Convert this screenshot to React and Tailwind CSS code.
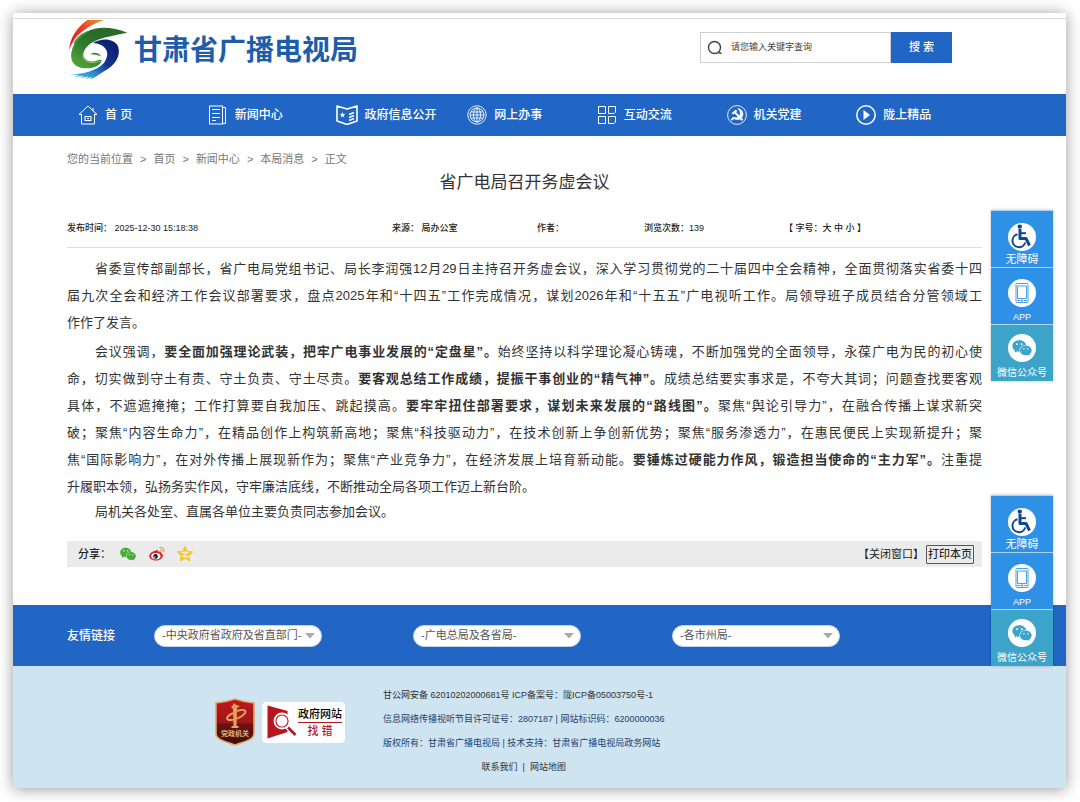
import { AiFillWechat } from 'react-icons/ai';

const navItems = [
  { label: '首 页', icon: HomeIcon },
  { label: '新闻中心', icon: NewsIcon },
  { label: '政府信息公开', icon: GovIcon },
  { label: '网上办事', icon: GlobeIcon },
  { label: '互动交流', icon: GridIcon },
  { label: '机关党建', icon: PartyIcon },
  { label: '陇上精品', icon: PlayIcon },
];

const crumbs = ['首页', '新闻中心', '本局消息', '正文'];

const friendLinks = [
  { id: 'gov', label: '-中央政府省政府及省直部门-' },
  { id: 'radio', label: '-广电总局及各省局-' },
  { id: 'city', label: '-各市州局-' },
];

function Logo() {
  return (
    <svg viewBox="0 0 216 204" className="h-[68px] w-[72px] shrink-0" aria-hidden="true">
      <defs>
        <linearGradient id="flame" x1="0" y1="1" x2="1" y2="0">
          <stop offset="0" stopColor="#d8131f" />
          <stop offset="0.5" stopColor="#e6352a" />
          <stop offset="1" stopColor="#f09a35" />
        </linearGradient>
        <linearGradient id="leaf" x1="0" y1="0.7" x2="0.5" y2="0.2">
          <stop offset="0" stopColor="#4c9c38" />
          <stop offset="0.5" stopColor="#2d7a2d" />
          <stop offset="1" stopColor="#2a6b28" />
        </linearGradient>
        <linearGradient id="wave" x1="1" y1="0.2" x2="0" y2="1">
          <stop offset="0" stopColor="#0a1f70" />
          <stop offset="0.35" stopColor="#12348f" />
          <stop offset="0.65" stopColor="#2f93d8" />
          <stop offset="1" stopColor="#55c3f2" />
        </linearGradient>
      </defs>
      <path d="M22 106C22 70 46 36 76 15H128C96 24 58 46 38 72C30 84 25 94 22 106Z" fill="url(#flame)" />
      <path d="M92 84C120 68 156 70 168 94C178 122 160 152 124 170C108 180 94 190 84 193L90 185L70 192L80 184L54 190L66 182L38 186L52 180L17 179C62 178 104 168 126 144C146 116 136 88 92 84Z" fill="url(#wave)" />
      <path d="M196 53C150 34 104 34 74 50C40 70 24 104 28 130C33 158 64 164 92 158C110 152 120 144 118 134L108 136C88 144 68 138 64 122C62 104 80 84 108 74C134 64 164 60 196 53Z" fill="url(#leaf)" />
      <path d="M84 118C94 110 112 112 117 124C106 120 96 118 84 118Z" fill="#3d8e34" />
      <path d="M63 118C58 140 84 150 118 138" fill="none" stroke="#86c04a" strokeWidth="3" />
      <path d="M34 84C48 62 64 50 88 46C66 56 50 68 40 88Z" fill="#4c9c38" />
    </svg>
  );
}

function HomeIcon() {
  return (
    <svg viewBox="0 0 20 20" className="h-5 w-5 shrink-0" fill="none" stroke="currentColor">
      <path d="M1 9.5L10 1L19 9.5M1 9.5H4M16 9.5H19M3.5 9.5V19H16.5V9.5" />
      <rect x="7" y="11.5" width="6" height="4" />
      <path d="M9 13.5H11M15 3V6" />
    </svg>
  );
}

function NewsIcon() {
  return (
    <svg viewBox="0 0 20 20" className="h-5 w-5 shrink-0" fill="none" stroke="currentColor">
      <rect x="1.5" y="1" width="13" height="18" />
      <path d="M14.5 2.5H17.5V18.5H14.5M4 4.5H12M4 8.5H12M4 12.5H12M4 15.5H8" />
    </svg>
  );
}

function GovIcon() {
  return (
    <svg viewBox="0 0 22 20" className="h-5 w-[22px] shrink-0" fill="none" stroke="currentColor" strokeWidth="1.6">
      <path d="M1 1L11 4L21 1V16L11 19.5L1 16Z" strokeLinejoin="round" />
      <path d="M13 9.5L18 7.5M13 12.5L18 10.5M13 15.5L18 13.5" strokeWidth="1.4" />
      <path d="M6.5 7L7.3 9H9.3L7.7 10.3L8.3 12.4L6.5 11.2L4.7 12.4L5.3 10.3L3.7 9H5.7Z" fill="currentColor" stroke="none" />
    </svg>
  );
}

function GlobeIcon() {
  return (
    <svg viewBox="0 0 20 20" className="h-5 w-5 shrink-0" fill="none" stroke="currentColor" strokeWidth="0.9">
      <circle cx="10" cy="10" r="9.2" />
      <circle cx="10" cy="10" r="7" />
      <ellipse cx="10" cy="10" rx="3.5" ry="7" />
      <path d="M10 3V17M3 10H17M4 7H16M4 13H16" />
    </svg>
  );
}

function GridIcon() {
  return (
    <svg viewBox="0 0 20 20" className="h-5 w-5 shrink-0" fill="none" stroke="currentColor">
      <path d="M1.5 1.5H8.5V8.5H1.5ZM11.5 1.5H18.5V7L17 8.5H11.5ZM1.5 11.5H8.5V18.5H1.5ZM11.5 11.5H18.5V17L17 18.5H11.5Z" />
    </svg>
  );
}

function PartyIcon() {
  return (
    <svg viewBox="0 0 20 20" className="h-5 w-5 shrink-0" fill="none" stroke="currentColor">
      <circle cx="10" cy="10" r="9.4" strokeWidth="0.9" />
      <path d="M11 3.6C16.2 4.6 17.4 10.6 13.8 13.4C11.2 15.4 7.8 14.6 5.8 12.4C8.4 13 11.4 12.8 12.8 10.4C14 8 13.4 5.6 11 3.6Z" fill="currentColor" strokeWidth="0.8" />
      <path d="M4.600 8.200L8.800 4.400L10.400 6L6.200 9.600Z" fill="currentColor" stroke="none" />
      <path d="M7.800 7.200L15.500 15.200" strokeWidth="2" />
      <path d="M6.500 13L4.300 15.200" strokeWidth="1.8" />
    </svg>
  );
}

function PlayIcon() {
  return (
    <svg viewBox="0 0 20 20" className="h-5 w-5 shrink-0" fill="none" stroke="currentColor" strokeWidth="1.5">
      <circle cx="10" cy="10" r="9.2" />
      <path d="M7.5 5L14 10L7.5 15Z" fill="currentColor" stroke="none" />
    </svg>
  );
}

function SearchIcon() {
  return (
    <svg viewBox="0 0 16 16" className="h-4 w-4 shrink-0" fill="none" stroke="#444" strokeWidth="1.5">
      <circle cx="7.5" cy="7.5" r="6" />
      <path d="M11.5 12.5L14.5 13.5" />
    </svg>
  );
}

function WheelchairIcon() {
  return (
    <svg viewBox="0 0 28 28" className="h-7 w-7" fill="none" stroke="#12478f" strokeWidth="2">
      <circle cx="11.8" cy="3.6" r="2.2" fill="#12478f" stroke="none" />
      <path d="M12 6V15.500H18L21.500 22.500" strokeWidth="3" strokeLinejoin="round" />
      <path d="M12 10.200H18" />
      <path d="M9.500 11.300A6.500 6.500 0 1 0 17.200 19.500" />
    </svg>
  );
}

function PhoneIcon() {
  return (
    <svg viewBox="0 0 14 20" className="h-5 w-[14px]" fill="none" stroke="#4aa0ea">
      <rect x="1" y="0.5" width="12" height="19" rx="1" />
      <path d="M2.500 3H11.500V15.500H2.500ZM2 17.500H5M9 17.500H12" />
      <circle cx="7" cy="17.500" r="0.8" fill="#4aa0ea" />
    </svg>
  );
}

function WeiboIcon() {
  return (
    <svg viewBox="0 0 16 16" className="h-4 w-4">
      <path d="M6.5 4.5C8 3.5 9.5 4 9 5.8C11 5 12.5 5.6 12 7.2C13.8 7.8 14 8.8 13.8 10C13.2 12.8 10 14.6 7 14.6C3.2 14.6 0.2 12.6 0.2 10C0.2 8 3 5.4 6.5 4.5Z" fill="#e02430" />
      <ellipse cx="6.8" cy="10.2" rx="4.6" ry="3.1" fill="#fff" />
      <circle cx="6.500" cy="10.400" r="2.300" fill="#1a1a1a" />
      <circle cx="5.800" cy="11" r="0.7" fill="#fff" />
      <path d="M10.5 1.5C13.5 1 15.600 3.400 14.800 6.200M11 3.800C12.400 3.500 13.200 4.400 12.800 5.700" fill="none" stroke="#f3a12c" strokeWidth="1.2" />
    </svg>
  );
}

function QzoneIcon() {
  return (
    <svg viewBox="0 0 16 16" className="h-4 w-4">
      <path d="M8 0.3L10.3 5.2L15.8 5.9L11.8 9.6L12.8 15L8 12.4L3.2 15L4.2 9.6L0.2 5.9L5.7 5.2Z" fill="#fcc32c" stroke="#fcc32c" strokeLinejoin="round" />
      <path d="M4.5 6.3H10.5L6 10.3C8 10.9 10.5 10.9 12.3 10.3" fill="none" stroke="#fff6da" strokeWidth="1.2" />
    </svg>
  );
}

function PartyBadge() {
  return (
    <svg viewBox="0 0 40 48" className="h-12 w-10" role="img" aria-label="党政机关">
      <defs>
        <linearGradient id="shield" x1="0" y1="0" x2="0" y2="1">
          <stop offset="0" stopColor="#c3161c" />
          <stop offset="0.52" stopColor="#9c1719" />
          <stop offset="0.54" stopColor="#6d1414" />
          <stop offset="1" stopColor="#3d0c0c" />
        </linearGradient>
      </defs>
      <path d="M1 5C8 4.5 14 3 20 1C26 3 32 4.5 39 5V35C39 42 30 43.5 20 47C10 43.5 1 42 1 35Z" fill="url(#shield)" stroke="#dda868" strokeWidth="1.6" />
      <path d="M16 9L18 7L19 5L21 7L25 8L22 10L21.500 28H23.500V30H16.500V28H18.500L18 11Z" fill="#dfa45f" />
      <path d="M22 13C31 10 33 14 27 18C21 22 13 23.500 12 20.500C12 18.500 15 16 19 15" fill="none" stroke="#dfa45f" strokeWidth="2" />
      <text x="20" y="38" textAnchor="middle" fontSize="7" fontWeight="700" fill="#e3b071">党政机关</text>
    </svg>
  );
}

function ErrorReport() {
  return (
    <a href="#report" className="flex h-[41px] w-[83px] items-center gap-px rounded-sm border border-white bg-[#fdfeff] pl-1">
      <svg viewBox="0 0 30 34" className="h-[34px] w-[30px] shrink-0" aria-hidden="true">
        <path d="M0.5 0.5L20.5 6V27L0.5 33.5Z" fill="#b8161f" />
        <circle cx="15" cy="16" r="7.5" fill="#b8161f" stroke="#fff" strokeWidth="1.8" />
        <circle cx="15" cy="16" r="5.5" fill="#fff" />
        <path d="M20 21.5L28.5 30" stroke="#fff" strokeWidth="5" />
        <path d="M21 22.5L28.5 30" stroke="#b8161f" strokeWidth="2.6" />
      </svg>
      <span className="flex flex-col items-center text-[11px] leading-4 font-medium">
        <span className="border-b border-[#b8161f] text-black">政府网站</span>
        <span className="text-[#b8161f]">找 错</span>
      </span>
    </a>
  );
}

function SidePanel({ className }) {
  const itemClass = 'flex h-[57px] flex-col items-center justify-end border-t border-white/60 text-white';

  return (
    <aside className={`absolute right-[13px] w-[62px] shadow-[0_0_3px_rgba(0,0,0,0.25)] ${className}`}>
      <a href="#accessible" className={`${itemClass} bg-[#2f91e6]`}>
        <span className="rounded-full bg-white">
          <WheelchairIcon />
        </span>
        <span className="text-[11px] leading-4">无障碍</span>
      </a>
      <a href="#app" className={`${itemClass} bg-[#2f91e6]`}>
        <span className="flex h-7 w-7 items-center justify-center rounded-full bg-white">
          <PhoneIcon />
        </span>
        <span className="mt-[3px] text-[9px] leading-[14px]">APP</span>
      </a>
      <a href="#wechat" className={`${itemClass} bg-[#3ca3c9]`}>
        <span className="flex h-7 w-7 items-center justify-center rounded-full bg-white text-[#3ca3c9]">
          <AiFillWechat className="h-[22px] w-[22px]" />
        </span>
        <span className="mt-[3px] text-[10px] leading-4">微信公众号</span>
      </a>
    </aside>
  );
}

function Header() {
  return (
    <header>
      <div className="h-[6px] border-b border-[#dcdcdc]" />
      <div className="flex h-[75px] items-start justify-between pl-[49px] pr-[114px]">
        <h1 className="-mt-1 flex items-center text-[28px] font-bold text-[#1d5dad]">
          <Logo />
          <span className="pt-1">甘肃省广播电视局</span>
        </h1>
        <form className="mt-[13px] flex h-[31px]">
          <label className="flex w-[191px] items-center gap-2 border border-[#cfcfcf] px-[6px]">
            <SearchIcon />
            <input
              type="text"
              placeholder="请您输入关键字查询"
              aria-label="请您输入关键字查询"
              className="w-full text-[9px] outline-none placeholder:text-[#444]"
            />
          </label>
          <button type="button" className="w-[61px] bg-[#2166c4] text-[11px] font-medium text-white">搜 索</button>
        </form>
      </div>
    </header>
  );
}

function MainNav() {
  return (
    <nav className="grid h-[42px] grid-cols-7 items-center bg-[#2166c4] pl-[54px] pr-[91px] text-white">
      {navItems.map((item) => {
        const Icon = item.icon;
        return (
          <a key={item.label} href="#nav" className="flex items-center gap-[7px] pl-[11px] text-xs font-medium whitespace-nowrap">
            <span className="flex w-5 justify-center"><Icon /></span>
            {item.label}
          </a>
        );
      })}
    </nav>
  );
}

function ArticleBody() {
  return (
    <div className="space-y-[2px] pt-[7px] text-[13px] leading-[27px] whitespace-nowrap text-[#333] [text-align-last:justify]">
      <p className="indent-7">
        省委宣传部副部长，省广电局党组书记、局长李润强12月29日主持召开务虚会议，深入学习贯彻党的二十届四中全会精神，全面贯彻落实省委十四<br />
        届九次全会和经济工作会议部署要求，盘点2025年和“十四五”工作完成情况，谋划2026年和“十五五”广电视听工作。局领导班子成员结合分管领域工
        <span className="block indent-0 [text-align-last:left]">作作了发言。</span>
      </p>
      <p className="indent-7">
        会议强调，<strong>要全面加强理论武装，把牢广电事业发展的“定盘星”。</strong>始终坚持以科学理论凝心铸魂，不断加强党的全面领导，永葆广电为民的初心使<br />
        命，切实做到守土有责、守土负责、守土尽责。<strong>要客观总结工作成绩，提振干事创业的“精气神”。</strong>成绩总结要实事求是，不夸大其词；问题查找要客观<br />
        具体，不遮遮掩掩；工作打算要自我加压、跳起摸高。<strong>要牢牢扭住部署要求，谋划未来发展的“路线图”。</strong>聚焦“舆论引导力”，在融合传播上谋求新突<br />
        破；聚焦“内容生命力”，在精品创作上构筑新高地；聚焦“科技驱动力”，在技术创新上争创新优势；聚焦“服务渗透力”，在惠民便民上实现新提升；聚<br />
        焦“国际影响力”，在对外传播上展现新作为；聚焦“产业竞争力”，在经济发展上培育新动能。<strong>要锤炼过硬能力作风，锻造担当使命的“主力军”。</strong>注重提
        <span className="block indent-0 [text-align-last:left]">升履职本领，弘扬务实作风，守牢廉洁底线，不断推动全局各项工作迈上新台阶。</span>
      </p>
      <p className="indent-7 leading-5 [text-align-last:left]">局机关各处室、直属各单位主要负责同志参加会议。</p>
    </div>
  );
}

function Article() {
  return (
    <main className="pl-[54px] pr-[84px] pt-[13px]">
      <div className="flex gap-[7px] text-[11px] leading-5 text-[#777]">
        <span>您的当前位置</span>
        {crumbs.map((crumb) => (
          <span key={crumb} className="flex gap-[7px]">
            <span>&gt;</span>
            <a href="#crumb">{crumb}</a>
          </span>
        ))}
      </div>
      <h2 className="mt-[2px] text-center text-[17px] leading-6 text-[#333]">省广电局召开务虚会议</h2>
      <div className="mt-[25px] grid grid-cols-[325fr_145fr_107fr_140fr_198fr] border-b border-[#ddd] pb-[11px] text-[9px] leading-4 font-medium text-[#222]">
        <span>发布时间： 2025-12-30 15:18:38</span>
        <span>来源： 局办公室</span>
        <span>作者：</span>
        <span>浏览次数：139</span>
        <span>【 字号：大 中 小 】</span>
      </div>
      <ArticleBody />
      <div className="mt-[19px] flex h-[26px] items-center bg-[#ebebeb] pl-[11px] pr-2 text-[11px] text-[#222]">
        <span className="font-medium">分享：</span>
        <span className="ml-2 flex items-center gap-3">
          <a href="#wechat" aria-label="微信"><AiFillWechat className="h-[18px] w-[18px] text-[#45b035]" /></a>
          <a href="#weibo" aria-label="微博"><WeiboIcon /></a>
          <a href="#qzone" aria-label="QQ空间"><QzoneIcon /></a>
        </span>
        <a href="#close" className="mr-[2px] ml-auto">【关闭窗口】</a>
        <button type="button" className="h-[19px] rounded-[1px] border border-[#555] px-px leading-4 text-black">打印本页</button>
      </div>
    </main>
  );
}

function FriendLinks() {
  return (
    <section className="mt-[38px] flex h-[61px] items-center bg-[#2166c4] pl-[54px]">
      <h3 className="w-[87px] text-xs font-medium text-white">友情链接</h3>
      <div className="flex gap-[91px]">
        {friendLinks.map((link) => (
          <div key={link.id} className="relative">
            <select aria-label={link.label} className="block h-[22px] w-[168px] appearance-none rounded-full border border-[#c5d3e6] bg-white px-[7px] text-[11px] text-[#555]">
              <option>{link.label}</option>
            </select>
            <svg viewBox="0 0 10 6" className="pointer-events-none absolute top-2 right-[7px] h-[6px] w-[10px]">
              <path d="M0 0H10L5 5.5Z" fill="#aaa" />
            </svg>
          </div>
        ))}
      </div>
    </section>
  );
}

function Footer() {
  return (
    <footer className="flex h-[122px] items-start bg-[#cee4f1] pl-[202px] text-[9px] text-[#1b426e]">
      <div className="mt-8 flex items-center gap-[7px]">
        <PartyBadge />
        <ErrorReport />
      </div>
      <div className="ml-[38px] pt-[17px] leading-6">
        <p className="text-[#333]">甘公网安备 62010202000681号 ICP备案号：陇ICP备05003750号-1</p>
        <p>信息网络传播视听节目许可证号：2807187 | 网站标识码：6200000036</p>
        <p>版权所有：甘肃省广播电视局 | 技术支持：甘肃省广播电视局政务网站</p>
        <p className="flex justify-center gap-[5px] text-[#333]">
          <a href="#contact">联系我们</a>
          <span>|</span>
          <a href="#sitemap">网站地图</a>
        </p>
      </div>
    </footer>
  );
}

export default function App() {
  return (
    <div className="bg-white pt-[13px] pr-[14px] pb-[14px] pl-[13px] font-['Liberation_Sans','Noto_Sans_CJK_SC',sans-serif]" lang="zh-CN">
      <div className="relative bg-white shadow-[0_1px_14px_rgba(0,0,0,0.4)]">
        <Header />
        <MainNav />
        <Article />
        <FriendLinks />
        <Footer />
        <SidePanel className="top-[197px]" />
        <SidePanel className="top-[482px]" />
      </div>
    </div>
  );
}
